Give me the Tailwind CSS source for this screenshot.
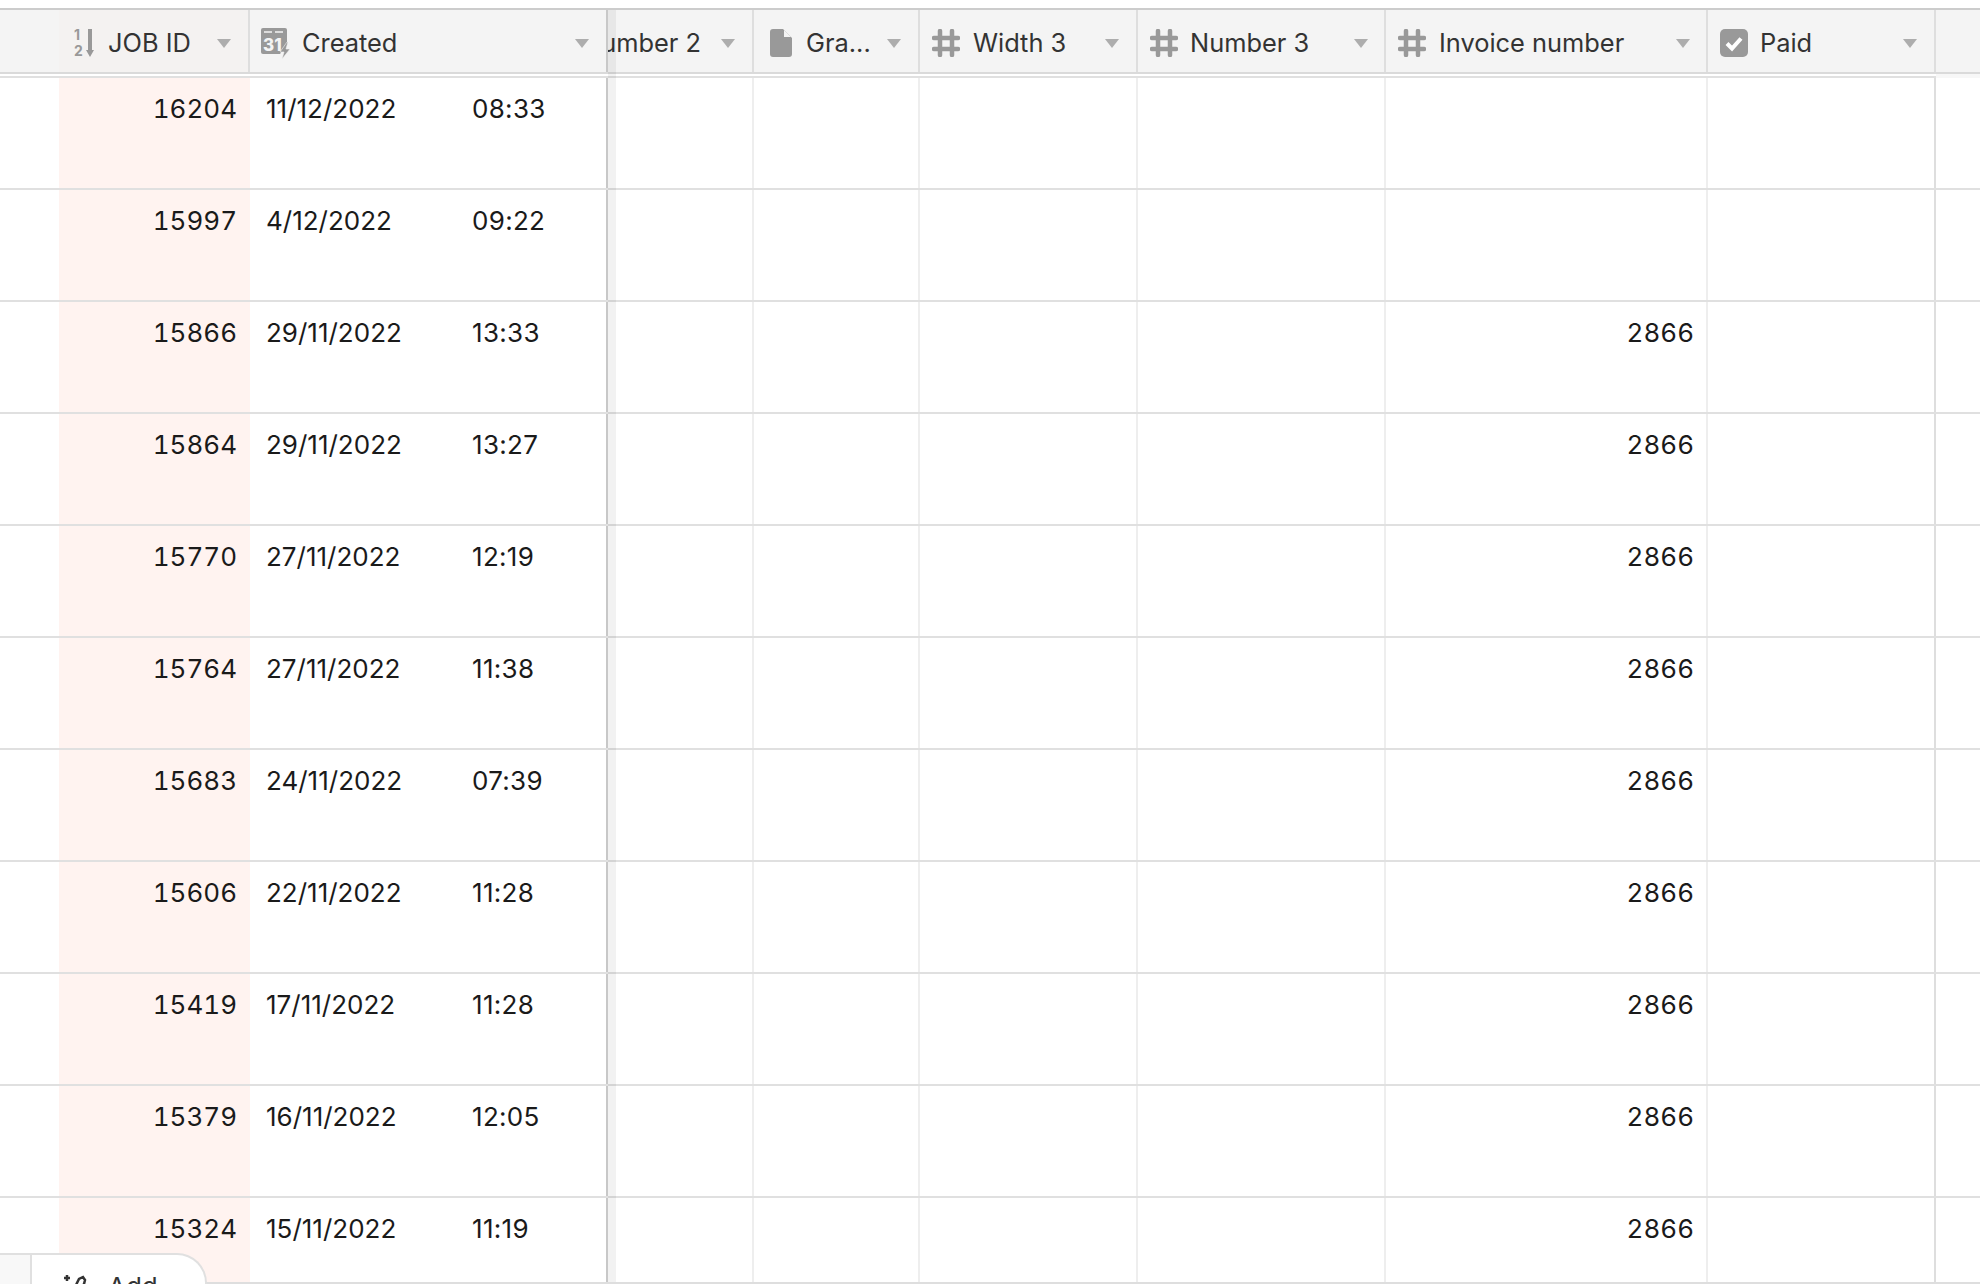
<!DOCTYPE html>
<html lang="en">
<head>
<meta charset="UTF-8">
<title>Jobs grid</title>
<script src="https://cdn.jsdelivr.net/npm/@tailwindcss/browser@4"></script>
</head>
<body class="h-screen overflow-hidden bg-white font-['Inter',sans-serif] text-[26px] leading-[32px] text-[#1a1a1a]">
<div class="relative h-[1284px] w-[1980px] overflow-hidden pt-[8px]">

  <!-- header -->
  <div class="grid h-[66px] grid-cols-[59px_191px_358px_146px_166px_218px_248px_322px_228px_44px] border-y-2 border-t-[#cccccc] border-b-[#dadada] bg-[#f4f4f4] text-[25.4px] text-[#333333]">
    <div></div>
    <div class="flex items-center border-r-2 border-[#dedede] bg-[#f4f2f1] pt-[4px] pl-[15px]">
      <svg class="mr-[14px] h-[30px] w-[20px]" viewBox="0 0 20 30"><text x="0" y="12" font-size="14" font-weight="700" fill="#999">1</text><text x="0" y="28" font-size="14" font-weight="700" fill="#999">2</text><path d="M14 1h4v21h2l-4 7-4-7h2z" fill="#999"/></svg>
      <span>JOB ID</span>
      <svg class="mr-[17px] ml-auto h-[9px] w-[14px]" viewBox="0 0 14 9"><path d="M0 0h14L7 9z" fill="#adadad"/></svg>
    </div>
    <div class="flex items-center border-r-2 border-[#c8c8c8] pt-[4px] pl-[10px]">
      <svg class="mr-[12px] h-[32px] w-[30px]" viewBox="0 0 30 32"><path d="M3 1h22a2 2 0 0 1 2 2v14l-7 10H3a2 2 0 0 1-2-2V3a2 2 0 0 1 2-2z" fill="#999"/><path d="M4 5h8M15 5h8" stroke="#f4f4f4" stroke-width="1.500"/><text x="3" y="24" font-size="17" font-weight="800" fill="#f4f4f4">31</text><path d="M27 15l-7 10h4l-2 7 8-10h-4l2-7z" fill="#999" stroke="#f4f4f4" stroke-width=".6"/></svg>
      <span>Created</span>
      <svg class="mr-[17px] ml-auto h-[9px] w-[14px]" viewBox="0 0 14 9"><path d="M0 0h14L7 9z" fill="#adadad"/></svg>
    </div>
    <div class="flex items-center overflow-hidden border-r-2 border-[#dedede] pt-[4px]">
      <span class="ml-[-26px] whitespace-nowrap">Number 2</span>
      <svg class="mr-[17px] ml-auto h-[9px] w-[14px] shrink-0" viewBox="0 0 14 9"><path d="M0 0h14L7 9z" fill="#adadad"/></svg>
    </div>
    <div class="flex items-center border-r-2 border-[#dedede] pt-[4px] pl-[16px]">
      <svg class="mr-[14px] h-[28px] w-[22px]" viewBox="0 0 22 28"><path d="M3 0h10l9 9v16a3 3 0 0 1-3 3H3a3 3 0 0 1-3-3V3a3 3 0 0 1 3-3z" fill="#999"/><path d="M14 1l7 7h-7z" fill="#f4f4f4"/></svg>
      <span>Gra...</span>
      <svg class="mr-[17px] ml-auto h-[9px] w-[14px]" viewBox="0 0 14 9"><path d="M0 0h14L7 9z" fill="#adadad"/></svg>
    </div>
    <div class="flex items-center border-r-2 border-[#dedede] pt-[4px] pl-[12px]">
      <svg class="mr-[13px] h-[28px] w-[28px]" viewBox="0 0 28 28" fill="none" stroke="#999" stroke-width="4.500" stroke-linecap="round"><path d="M8 2v24M20 2v24M2 9h24M2 20h24"/></svg>
      <span>Width 3</span>
      <svg class="mr-[17px] ml-auto h-[9px] w-[14px]" viewBox="0 0 14 9"><path d="M0 0h14L7 9z" fill="#adadad"/></svg>
    </div>
    <div class="flex items-center border-r-2 border-[#dedede] pt-[4px] pl-[12px]">
      <svg class="mr-[12px] h-[28px] w-[28px]" viewBox="0 0 28 28" fill="none" stroke="#999" stroke-width="4.500" stroke-linecap="round"><path d="M8 2v24M20 2v24M2 9h24M2 20h24"/></svg>
      <span>Number 3</span>
      <svg class="mr-[16px] ml-auto h-[9px] w-[14px]" viewBox="0 0 14 9"><path d="M0 0h14L7 9z" fill="#adadad"/></svg>
    </div>
    <div class="flex items-center border-r-2 border-[#dedede] pt-[4px] pl-[12px]">
      <svg class="mr-[13px] h-[28px] w-[28px]" viewBox="0 0 28 28" fill="none" stroke="#999" stroke-width="4.500" stroke-linecap="round"><path d="M8 2v24M20 2v24M2 9h24M2 20h24"/></svg>
      <span>Invoice number</span>
      <svg class="mr-[16px] ml-auto h-[9px] w-[14px]" viewBox="0 0 14 9"><path d="M0 0h14L7 9z" fill="#adadad"/></svg>
    </div>
    <div class="flex items-center border-r-2 border-[#dedede] pt-[4px] pl-[12px]">
      <svg class="mr-[12px] h-[28px] w-[28px]" viewBox="0 0 28 28"><rect width="28" height="28" rx="5" fill="#999"/><path d="M7 14.500l5 5 9-10" fill="none" stroke="#fff" stroke-width="4"/></svg>
      <span>Paid</span>
      <svg class="mr-[17px] ml-auto h-[9px] w-[14px]" viewBox="0 0 14 9"><path d="M0 0h14L7 9z" fill="#adadad"/></svg>
    </div>
    <div></div>
  </div>

  <!-- rows -->
  <div class="flex h-[1208px] flex-col bg-[#f7f7f7]">
    <div class="mr-[44px] h-[2px] shrink-0 bg-white"></div>
    <div class="mr-[44px] h-[2px] shrink-0 bg-[#e0e0e0]"></div>

    <div class="grid h-[112px] shrink-0 grid-cols-[59px_191px_358px_146px_166px_218px_248px_322px_228px] bg-white border-b-2 border-[#e0e0e0]">
      <div></div><div class="bg-[#fff3f0] pt-[15px] pr-[13px] text-right tabular-nums">16204</div><div class="flex border-r-2 border-[#c8c8c8] pt-[15px] pl-[16px]"><span class="w-[206px]">11/12/2022</span><span class="tracking-[0.3px]">08:33</span></div><div class="border-r-2 border-[#eeeeee]"></div><div class="border-r-2 border-[#eeeeee]"></div><div class="border-r-2 border-[#eeeeee]"></div><div class="border-r-2 border-[#eeeeee]"></div><div class="border-r-2 border-[#eeeeee]"></div><div class="border-r-2 border-[#dedede]"></div>
    </div>
    <div class="grid h-[112px] shrink-0 grid-cols-[59px_191px_358px_146px_166px_218px_248px_322px_228px] bg-white border-b-2 border-[#e0e0e0]">
      <div></div><div class="bg-[#fff3f0] pt-[15px] pr-[13px] text-right tabular-nums">15997</div><div class="flex border-r-2 border-[#c8c8c8] pt-[15px] pl-[16px]"><span class="w-[206px]">4/12/2022</span><span class="tracking-[0.3px]">09:22</span></div><div class="border-r-2 border-[#eeeeee]"></div><div class="border-r-2 border-[#eeeeee]"></div><div class="border-r-2 border-[#eeeeee]"></div><div class="border-r-2 border-[#eeeeee]"></div><div class="border-r-2 border-[#eeeeee]"></div><div class="border-r-2 border-[#dedede]"></div>
    </div>
    <div class="grid h-[112px] shrink-0 grid-cols-[59px_191px_358px_146px_166px_218px_248px_322px_228px] bg-white border-b-2 border-[#e0e0e0]">
      <div></div><div class="bg-[#fff3f0] pt-[15px] pr-[13px] text-right tabular-nums">15866</div><div class="flex border-r-2 border-[#c8c8c8] pt-[15px] pl-[16px]"><span class="w-[206px]">29/11/2022</span><span class="tracking-[0.3px]">13:33</span></div><div class="border-r-2 border-[#eeeeee]"></div><div class="border-r-2 border-[#eeeeee]"></div><div class="border-r-2 border-[#eeeeee]"></div><div class="border-r-2 border-[#eeeeee]"></div><div class="border-r-2 border-[#eeeeee] pt-[15px] pr-[12px] text-right tabular-nums">2866</div><div class="border-r-2 border-[#dedede]"></div>
    </div>
    <div class="grid h-[112px] shrink-0 grid-cols-[59px_191px_358px_146px_166px_218px_248px_322px_228px] bg-white border-b-2 border-[#e0e0e0]">
      <div></div><div class="bg-[#fff3f0] pt-[15px] pr-[13px] text-right tabular-nums">15864</div><div class="flex border-r-2 border-[#c8c8c8] pt-[15px] pl-[16px]"><span class="w-[206px]">29/11/2022</span><span class="tracking-[0.3px]">13:27</span></div><div class="border-r-2 border-[#eeeeee]"></div><div class="border-r-2 border-[#eeeeee]"></div><div class="border-r-2 border-[#eeeeee]"></div><div class="border-r-2 border-[#eeeeee]"></div><div class="border-r-2 border-[#eeeeee] pt-[15px] pr-[12px] text-right tabular-nums">2866</div><div class="border-r-2 border-[#dedede]"></div>
    </div>
    <div class="grid h-[112px] shrink-0 grid-cols-[59px_191px_358px_146px_166px_218px_248px_322px_228px] bg-white border-b-2 border-[#e0e0e0]">
      <div></div><div class="bg-[#fff3f0] pt-[15px] pr-[13px] text-right tabular-nums">15770</div><div class="flex border-r-2 border-[#c8c8c8] pt-[15px] pl-[16px]"><span class="w-[206px]">27/11/2022</span><span class="tracking-[0.3px]">12:19</span></div><div class="border-r-2 border-[#eeeeee]"></div><div class="border-r-2 border-[#eeeeee]"></div><div class="border-r-2 border-[#eeeeee]"></div><div class="border-r-2 border-[#eeeeee]"></div><div class="border-r-2 border-[#eeeeee] pt-[15px] pr-[12px] text-right tabular-nums">2866</div><div class="border-r-2 border-[#dedede]"></div>
    </div>
    <div class="grid h-[112px] shrink-0 grid-cols-[59px_191px_358px_146px_166px_218px_248px_322px_228px] bg-white border-b-2 border-[#e0e0e0]">
      <div></div><div class="bg-[#fff3f0] pt-[15px] pr-[13px] text-right tabular-nums">15764</div><div class="flex border-r-2 border-[#c8c8c8] pt-[15px] pl-[16px]"><span class="w-[206px]">27/11/2022</span><span class="tracking-[0.3px]">11:38</span></div><div class="border-r-2 border-[#eeeeee]"></div><div class="border-r-2 border-[#eeeeee]"></div><div class="border-r-2 border-[#eeeeee]"></div><div class="border-r-2 border-[#eeeeee]"></div><div class="border-r-2 border-[#eeeeee] pt-[15px] pr-[12px] text-right tabular-nums">2866</div><div class="border-r-2 border-[#dedede]"></div>
    </div>
    <div class="grid h-[112px] shrink-0 grid-cols-[59px_191px_358px_146px_166px_218px_248px_322px_228px] bg-white border-b-2 border-[#e0e0e0]">
      <div></div><div class="bg-[#fff3f0] pt-[15px] pr-[13px] text-right tabular-nums">15683</div><div class="flex border-r-2 border-[#c8c8c8] pt-[15px] pl-[16px]"><span class="w-[206px]">24/11/2022</span><span class="tracking-[0.3px]">07:39</span></div><div class="border-r-2 border-[#eeeeee]"></div><div class="border-r-2 border-[#eeeeee]"></div><div class="border-r-2 border-[#eeeeee]"></div><div class="border-r-2 border-[#eeeeee]"></div><div class="border-r-2 border-[#eeeeee] pt-[15px] pr-[12px] text-right tabular-nums">2866</div><div class="border-r-2 border-[#dedede]"></div>
    </div>
    <div class="grid h-[112px] shrink-0 grid-cols-[59px_191px_358px_146px_166px_218px_248px_322px_228px] bg-white border-b-2 border-[#e0e0e0]">
      <div></div><div class="bg-[#fff3f0] pt-[15px] pr-[13px] text-right tabular-nums">15606</div><div class="flex border-r-2 border-[#c8c8c8] pt-[15px] pl-[16px]"><span class="w-[206px]">22/11/2022</span><span class="tracking-[0.3px]">11:28</span></div><div class="border-r-2 border-[#eeeeee]"></div><div class="border-r-2 border-[#eeeeee]"></div><div class="border-r-2 border-[#eeeeee]"></div><div class="border-r-2 border-[#eeeeee]"></div><div class="border-r-2 border-[#eeeeee] pt-[15px] pr-[12px] text-right tabular-nums">2866</div><div class="border-r-2 border-[#dedede]"></div>
    </div>
    <div class="grid h-[112px] shrink-0 grid-cols-[59px_191px_358px_146px_166px_218px_248px_322px_228px] bg-white border-b-2 border-[#e0e0e0]">
      <div></div><div class="bg-[#fff3f0] pt-[15px] pr-[13px] text-right tabular-nums">15419</div><div class="flex border-r-2 border-[#c8c8c8] pt-[15px] pl-[16px]"><span class="w-[206px]">17/11/2022</span><span class="tracking-[0.3px]">11:28</span></div><div class="border-r-2 border-[#eeeeee]"></div><div class="border-r-2 border-[#eeeeee]"></div><div class="border-r-2 border-[#eeeeee]"></div><div class="border-r-2 border-[#eeeeee]"></div><div class="border-r-2 border-[#eeeeee] pt-[15px] pr-[12px] text-right tabular-nums">2866</div><div class="border-r-2 border-[#dedede]"></div>
    </div>
    <div class="grid h-[112px] shrink-0 grid-cols-[59px_191px_358px_146px_166px_218px_248px_322px_228px] bg-white border-b-2 border-[#e0e0e0]">
      <div></div><div class="bg-[#fff3f0] pt-[15px] pr-[13px] text-right tabular-nums">15379</div><div class="flex border-r-2 border-[#c8c8c8] pt-[15px] pl-[16px]"><span class="w-[206px]">16/11/2022</span><span class="tracking-[0.3px]">12:05</span></div><div class="border-r-2 border-[#eeeeee]"></div><div class="border-r-2 border-[#eeeeee]"></div><div class="border-r-2 border-[#eeeeee]"></div><div class="border-r-2 border-[#eeeeee]"></div><div class="border-r-2 border-[#eeeeee] pt-[15px] pr-[12px] text-right tabular-nums">2866</div><div class="border-r-2 border-[#dedede]"></div>
    </div>
    <div class="grid h-[86px] shrink-0 grid-cols-[59px_191px_358px_146px_166px_218px_248px_322px_228px] bg-white border-b-2 border-[#dedede]">
      <div></div><div class="bg-[#fff3f0] pt-[15px] pr-[13px] text-right tabular-nums">15324</div><div class="flex border-r-2 border-[#c8c8c8] pt-[15px] pl-[16px]"><span class="w-[206px]">15/11/2022</span><span class="tracking-[0.3px]">11:19</span></div><div class="border-r-2 border-[#eeeeee]"></div><div class="border-r-2 border-[#eeeeee]"></div><div class="border-r-2 border-[#eeeeee]"></div><div class="border-r-2 border-[#eeeeee]"></div><div class="border-r-2 border-[#eeeeee] pt-[15px] pr-[12px] text-right tabular-nums">2866</div><div class="border-r-2 border-[#dedede]"></div>
    </div>
  </div>

  <!-- frozen pane shadow -->
  <div class="pointer-events-none absolute top-[10px] bottom-[2px] left-[608px] w-[8px] bg-black/[0.05]"></div>

  <!-- add tab over the grid -->
  <div class="absolute bottom-0 left-0 h-[31px] w-[31px] border-t-2 border-[#e0e0e0] bg-[#f8f8f8]"></div>
  <div class="absolute bottom-0 left-[30px] h-[31px] w-[177px] overflow-hidden rounded-tr-[30px] border-t-2 border-r-2 border-l-2 border-[#e0e0e0] bg-white">
    <div class="flex items-start pt-[18px] pl-[30px] text-[#333333]">
      <svg class="mr-[20px] h-[26px] w-[26px]" viewBox="0 0 26 26" fill="none" stroke="#333" stroke-width="2.500"><path d="M2 5h6M5 2v6"/><path d="M9 22L17 6l4-2 2 3-1 4-10 12z"/></svg>
      <span class="mt-[-2px]">Add</span>
    </div>
  </div>
</div>
</body>
</html>
